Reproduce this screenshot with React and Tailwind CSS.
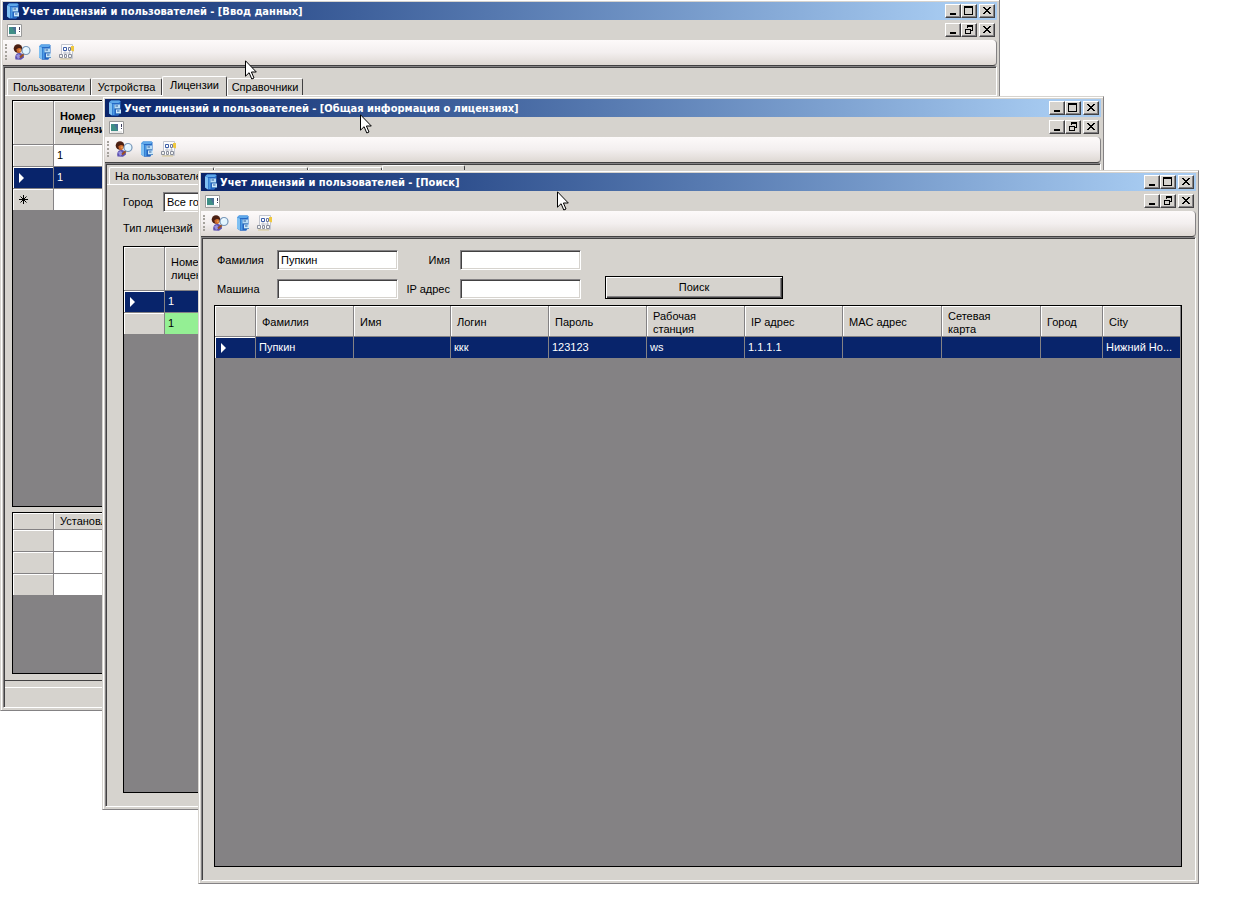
import clsx from 'clsx';

const raised =
    'bg-[#d6d3ce] border border-t-white border-l-white border-b-[#424142] border-r-[#424142] shadow-[inset_-1px_-1px_0_#848284]';
const field =
    'bg-white border border-t-[#848284] border-l-[#848284] border-b-white border-r-white shadow-[inset_1px_1px_0_#424142,inset_-1px_-1px_0_#d6d3ce]';

/* Icons */

function CabinetIcon() {
    return (
        <svg width="16" height="16" viewBox="0 0 16 16" aria-hidden="true">
            <path d="M2 2.500 4 .5h8.500l1 1V13L11 15.500H5L2 13.500z" fill="#2a73cc" />
            <path d="M2 2.500 5 3.500v12L2 13.500z" fill="#7fc0f2" />
            <path d="M2 2.500 4 .5h8.500l1 1-2 1.500H5z" fill="#5fa8ea" />
            <path d="M5 3.500 11.500 3v12.500H5z" fill="#2463bf" />
            <path d="M5.500 4h2v11h-2z" fill="#4a9be4" />
            <path d="M7.500 4.500h5.500v4H7.500z" fill="#b8dcf6" />
            <path d="M9 9.500h5v4H9z" fill="#cde8fa" />
            <path d="M8.500 5.500h2.500v1H8.500zM10 10.500h2.500v1H10z" fill="#2d5f9e" />
            <path d="M7.500 8h5.500v1H7.500zM9 13h5v1H9z" fill="#5c92c8" />
        </svg>
    );
}

function UserSearchIcon() {
    return (
        <svg width="18" height="16" viewBox="0 0 18 16" aria-hidden="true">
            <path d="M2.500 15.500c-1-3.500.5-6.500 3.500-6.500s5 2 5 4.500l-3 2.300z" fill="#5d51b0" />
            <path d="M3 11.500 6 10l2 3-3 2z" fill="#9892de" />
            <circle cx="5" cy="4.500" r="4.300" fill="#4a1f12" />
            <path d="M3.500 5.500C5 3.500 8 3.500 8.500 5.500 8.800 7.500 7.500 9 6 9S3.300 7.500 3.500 5.500z" fill="#c9662c" />
            <path d="M5.500 6C6.500 5 8 5 8 6.500 8 8 6 8 5.500 6z" fill="#e89a4c" />
            <path d="M7 13.500 11 10" stroke="#9a4f22" strokeWidth="2" />
            <circle cx="13" cy="6.500" r="4" fill="#e2f5ff" stroke="#7896b8" strokeWidth="1.200" />
            <path d="M11 5.500c.5-1.200 1.500-1.500 2.500-1.500" stroke="#fff" fill="none" />
        </svg>
    );
}

function SchemeIcon() {
    return (
        <svg width="16" height="16" viewBox="0 0 16 16" aria-hidden="true">
            <path d="M2.500.5h11v14h-11z" fill="#fbfbfc" stroke="#c3c6cf" />
            <path d="M4.500 3.500h3v3h-3z" fill="#fff" stroke="#3f5fa8" />
            <path d="M9.500 3.500h2v3h-2z" fill="#fff" stroke="#6f7aa0" />
            <path d="M12 2h3v5.500l-3-1z" fill="#efc83f" />
            <path d="M6 7v3M10.500 7v3M4 9h8" stroke="#bfc3cc" />
            <path d="M.5 10.500h3v3h-3zM5.500 10.500h2v3h-2zM9.500 10.500h3v3h-3z" fill="#f3f3f3" stroke="#8a8f9c" />
            <path d="M1 15h11" stroke="#d8c890" />
        </svg>
    );
}

function FormIcon() {
    return (
        <svg width="15" height="13" viewBox="0 0 15 13" aria-hidden="true">
            <path d="M.5.5h14v12H.5z" fill="#fff" stroke="#9a9a9a" />
            <path d="M2 3h7v7H2z" fill="#3f8f86" />
            <path d="M5 3h4v7z" fill="#4a6f93" />
            <path d="M12.500 3v3M12.500 7v1" stroke="#3c3c5c" />
            <path d="M2 11h11" stroke="#d0d0d0" />
        </svg>
    );
}

function Cursor({ className }) {
    return (
        <svg className={clsx('absolute', className)} width="12" height="20" viewBox="0 0 12 20" aria-hidden="true">
            <path d="M.5.8v15.400l3.600-3.500 2.700 6.300 2.200-1-2.600-6h4.900z" fill="#fff" stroke="#000" />
        </svg>
    );
}

function CaptionButton({ kind, label }) {
    return (
        <button type="button" aria-label={label} className={clsx('w-4 h-3.5 flex items-center justify-center', raised, kind === 'close' && 'ml-0.5')}>
            <svg width="12" height="10" viewBox="0 0 12 10" fill="none" stroke="#000" shapeRendering="crispEdges">
                {kind === 'min' && <path d="M3 8h6" strokeWidth="2" />}
                {kind === 'max' && <path d="M1.500 1v7.500h8V1M1 1h9" strokeWidth="1" />}
                {kind === 'max' && <path d="M1 1h9" strokeWidth="2" />}
                {kind === 'restore' && <path d="M4.500 3V.5h5v5H8M4 1h6M2.500 4.500h5v4h-5zM2 4h6" />}
                {kind === 'close' && <path d="M2 1l7 7M3 1l7 7M9 1L2 8M10 1L3 8" shapeRendering="auto" />}
            </svg>
        </button>
    );
}

/* Window frame with the caption, the MDI menu row and the toolbar */

function AppWindow({ title, className, children }) {
    return (
        <section className={clsx('absolute flex flex-col bg-[#d6d3ce] p-0.5 border border-[#d6d3ce] border-b-[#848284] border-r-[#848284] shadow-[inset_1px_1px_0_#fff]', className)}>
            <header className="h-[18px] shrink-0 flex items-center px-0.5 bg-linear-to-r from-[#0a246a] to-[#a6caf0] to-95%">
                <CabinetIcon />
                <h1 className="flex-1 pl-px whitespace-nowrap text-white font-bold font-['DejaVu_Sans_Condensed','DejaVu_Sans',sans-serif]">
                    {title}
                </h1>
                <CaptionButton kind="min" label="Свернуть" />
                <CaptionButton kind="max" label="Развернуть" />
                <CaptionButton kind="close" label="Закрыть" />
            </header>
            <div className="h-5 shrink-0 flex items-center pl-1 pr-0.5">
                <FormIcon />
                <div className="flex-1" />
                <CaptionButton kind="min" label="Свернуть форму" />
                <CaptionButton kind="restore" label="Восстановить форму" />
                <CaptionButton kind="close" label="Закрыть форму" />
            </div>
            <nav className="h-[26px] shrink-0 flex items-center pl-0.5 pb-0.5 rounded-r-sm border-b border-r border-b-[#424142] border-r-[#848284] bg-linear-to-b from-[#fdfafa] via-[#f3efef] to-[#ded8d3]">
                <span className="h-4 w-0.5 mr-1.5 border-l-2 border-dotted border-[#a5a29c]" />
                <button type="button" aria-label="Поиск пользователей" className="w-6"><UserSearchIcon /></button>
                <button type="button" aria-label="Ввод данных" className="w-[22px]"><CabinetIcon /></button>
                <button type="button" aria-label="Общая информация"><SchemeIcon /></button>
            </nav>
            <main className="flex-1 min-h-0 flex flex-col border border-t-[#848284] border-l-[#848284] border-b-white border-r-white shadow-[inset_1px_1px_0_#424142] pl-px pt-px">
                {children}
            </main>
        </section>
    );
}

function Tabs({ items, active }) {
    return (
        <div role="tablist" className="h-5 shrink-0 flex items-end pl-0.5 border-b border-white">
            {items.map(({ name, width }, i) => (
                <button
                    key={i}
                    type="button"
                    role="tab"
                    aria-selected={i === active}
                    className={clsx(
                        'shrink-0 rounded-t-xs border border-b-0 border-t-white border-l-white border-r-[#424142] whitespace-nowrap',
                        i === active ? 'h-5 -mb-px pb-0.5 bg-[#d6d3ce]' : 'h-[17px]',
                        width
                    )}
                >
                    {name}
                </button>
            ))}
        </div>
    );
}

function DataGrid({ columns, rows, headHeight, headClass, className }) {
    return (
        <div className={clsx('bg-[#848284] border border-black overflow-hidden', className)}>
            <table className="w-full table-fixed border-separate border-spacing-0 text-left">
                <colgroup>
                    <col className="w-[41px]" />
                    {columns.map((c, j) => <col key={j} className={c.width} />)}
                </colgroup>
                <thead>
                    <tr className={headHeight}>
                        <th className="border-r border-b border-[#848284] bg-[#d6d3ce] shadow-[inset_1px_1px_0_#fff]" />
                        {columns.map((c, j) => (
                            <th key={j} className={clsx('pl-1.5 pr-5 border-r border-b border-[#848284] bg-[#d6d3ce] shadow-[inset_1px_1px_0_#fff]', headClass)}>
                                {c.name}
                            </th>
                        ))}
                    </tr>
                </thead>
                <tbody>
                    {rows.map((row, i) => (
                        <tr key={i} className={clsx('h-[22px]', row.selected ? 'bg-[#08246b] text-white' : row.green ? 'bg-[#94ef94]' : 'bg-white')}>
                            <th className={clsx('pl-1.5 border-r border-b border-[#848284] shadow-[inset_1px_1px_0_#fff]', !row.selected && 'bg-[#d6d3ce]')}>
                                {row.selected && (
                                    <svg width="5" height="10" viewBox="0 0 5 10" aria-hidden="true"><path d="M0 0l5 5-5 5z" fill="#fff" /></svg>
                                )}
                                {row.isNew && (
                                    <svg width="9" height="9" viewBox="0 0 9 9" stroke="#000" aria-hidden="true"><path d="M4.500 0v9M0 4.500h9M1.500 1.500l6 6M7.500 1.500l-6 6" /></svg>
                                )}
                            </th>
                            {columns.map((c, j) => (
                                <td key={j} className="pl-[3px] border-r border-b border-[#848284] whitespace-nowrap overflow-hidden">
                                    {row.cells[j]}
                                </td>
                            ))}
                        </tr>
                    ))}
                </tbody>
            </table>
        </div>
    );
}

/* Data */

const dataTabs = [
    { name: 'Пользователи', width: 'w-[84px]' },
    { name: 'Устройства', width: 'w-[71px]' },
    { name: 'Лицензии', width: 'w-[65px]' },
    { name: 'Справочники', width: 'w-[76px]' },
];

const infoTabs = [
    { name: 'На пользователей', width: 'w-[105px]' },
    { width: 'w-[94px]' },
    { width: 'w-[74px]' },
    { width: 'w-[83px]' },
];

const searchColumns = [
    { name: 'Фамилия', width: 'w-[98px]' },
    { name: 'Имя', width: 'w-[97px]' },
    { name: 'Логин', width: 'w-[98px]' },
    { name: 'Пароль', width: 'w-[98px]' },
    { name: 'Рабочая станция', width: 'w-[98px]' },
    { name: 'IP адрес', width: 'w-[98px]' },
    { name: 'MAC адрес', width: 'w-[99px]' },
    { name: 'Сетевая карта', width: 'w-[99px]' },
    { name: 'Город', width: 'w-[62px]' },
    { name: 'City' },
];

const searchRows = [
    { selected: true, cells: ['Пупкин', '', 'ккк', '123123', 'ws', '1.1.1.1', '', '', '', 'Нижний Но...'] },
];

export default function App() {
    return (
        <div className="relative h-screen overflow-hidden bg-white text-black text-[11px] leading-[13px] font-['Liberation_Sans',Arial,sans-serif]">
            <AppWindow title="Учет лицензий и пользователей - [Ввод данных]" className="-top-px left-0 right-[238px] bottom-[186px]">
                <div className="flex-1 min-h-0 flex flex-col pt-2 border-b border-[#424142]">
                    <Tabs items={dataTabs} active={2} />
                    <div className="flex-1 min-h-0 flex flex-col gap-[5px] px-[7px] pt-1 pb-1.5">
                        <DataGrid
                            className="h-[407px] shrink-0"
                            headHeight="h-11"
                            headClass="font-bold"
                            columns={[{ name: 'Номер лицензии', width: 'w-20' }, {}]}
                            rows={[
                                { cells: ['1'] },
                                { selected: true, cells: ['1'] },
                                { isNew: true, cells: [] },
                            ]}
                        />
                        <DataGrid
                            className="flex-1"
                            headHeight="h-[17px]"
                            headClass="font-normal"
                            columns={[{ name: 'Установлена' }]}
                            rows={[{ cells: [] }, { cells: [] }, { cells: [] }]}
                        />
                    </div>
                </div>
                <footer className="h-5 mt-1.5 shrink-0 border-t border-white" />
            </AppWindow>
            <Cursor className="left-[245px] top-[60px]" />

            <AppWindow title="Учет лицензий и пользователей - [Общая информация о лицензиях]" className="top-24 left-[102px] right-[134px] bottom-[87px]">
                <Tabs items={infoTabs} active={3} />
                <div className="flex-1 min-h-0 flex flex-col pl-4 pr-3 pt-[7px] pb-[13px]">
                    <div className="h-5 shrink-0 flex items-center">
                        <label htmlFor="city" className="w-10">Город</label>
                        <select id="city" className={clsx('w-[121px] h-5 pl-[3px] appearance-none', field)}>
                            <option>Все города</option>
                        </select>
                    </div>
                    <p className="h-[34px] pt-2.5 shrink-0">Тип лицензий</p>
                    <DataGrid
                        className="flex-1"
                        headHeight="h-11"
                        headClass="font-normal"
                        columns={[{ name: 'Номер лицензии', width: 'w-20' }, {}]}
                        rows={[
                            { selected: true, cells: ['1'] },
                            { green: true, cells: ['1'] },
                        ]}
                    />
                </div>
            </AppWindow>
            <Cursor className="left-[360px] top-[114px]" />

            <AppWindow title="Учет лицензий и пользователей - [Поиск]" className="top-[170px] left-[198px] right-[39px] bottom-[13px]">
                <div className="flex-1 min-h-0 flex flex-col pl-[11px] pr-[13px] pt-[11px] pb-[13px]">
                    <form className="shrink-0 pl-[3px] mb-1.5 grid grid-cols-[60px_121px_62px_121px_202px] grid-rows-[20px_20px] gap-y-[9px] items-center">
                        <label htmlFor="surname">Фамилия</label>
                        <input id="surname" defaultValue="Пупкин" className={clsx('w-full h-5 px-[3px]', field)} />
                        <label htmlFor="name" className="text-right pr-2.5">Имя</label>
                        <input id="name" className={clsx('w-full h-5 px-[3px]', field)} />
                        <button type="button" className="row-span-2 self-end ml-6 h-[23px] border border-black bg-[#d6d3ce] shadow-[inset_1px_1px_0_#fff,inset_-1px_-1px_0_#424142,inset_-2px_-2px_0_#848284]">
                            Поиск
                        </button>
                        <label htmlFor="machine">Машина</label>
                        <input id="machine" className={clsx('w-full h-5 px-[3px]', field)} />
                        <label htmlFor="ip" className="text-right pr-2.5">IP адрес</label>
                        <input id="ip" className={clsx('w-full h-5 px-[3px]', field)} />
                    </form>
                    <DataGrid
                        className="flex-1"
                        headHeight="h-[31px]"
                        headClass="font-normal pt-[3px]"
                        columns={searchColumns}
                        rows={searchRows}
                    />
                </div>
            </AppWindow>
            <Cursor className="left-[557px] top-[191px]" />
        </div>
    );
}
